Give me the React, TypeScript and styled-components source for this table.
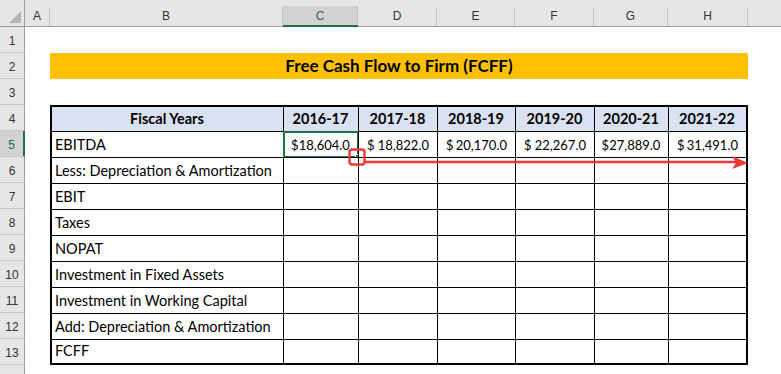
import styled, { createGlobalStyle } from "styled-components";

const GlobalStyle = createGlobalStyle`
	html, body {
		margin: 0;
		padding: 0;
		background: #ffffff;
	}
	body {
		width: 781px;
		height: 374px;
		overflow: hidden;
		font-family: "Lato", "Liberation Sans", sans-serif;
	}
`;

const COLS = [25, 25, 233, 75, 79, 78, 79, 74, 80];

const Sheet = styled.div`
	position: relative;
	display: grid;
	grid-template-columns: ${COLS.map((c) => c + "px").join(" ")} 1fr;
	grid-template-rows: 27px;
	grid-auto-rows: 26px;
	width: 781px;
	height: 374px;
	overflow: hidden;
	background: #ffffff;
`;

const Corner = styled.div`
	position: relative;
	background: #e6e6e6;
	border-right: 1px solid #9e9e9e;
	border-bottom: 1px solid #9e9e9e;
	box-sizing: border-box;

	svg {
		position: absolute;
		right: 3px;
		bottom: 3px;
	}
`;

const ColHead = styled.div<{ $active?: boolean; $last?: boolean }>`
	display: flex;
	align-items: flex-end;
	background: #e6e6e6;
	box-sizing: border-box;
	border-bottom: ${({ $active }) => ($active ? "2px solid #217346" : "1px solid #9e9e9e")};
	padding-top: 8px;

	span {
		flex: 1;
		height: 19px;
		display: flex;
		align-items: center;
		justify-content: center;
		box-sizing: border-box;
		border-right: ${({ $last }) => ($last ? "none" : "1px solid #c4c4c4")};
		background: ${({ $active }) => ($active ? "#d2d2d2" : "#e6e6e6")};
		color: ${({ $active }) => ($active ? "#1f6b45" : "#333333")};
		font-family: "Liberation Sans", sans-serif;
		font-size: 12px;
		padding-bottom: ${({ $active }) => ($active ? "0" : "1px")};
	}
`;

const RowHead = styled.div<{ $active?: boolean }>`
	display: flex;
	align-items: flex-end;
	justify-content: center;
	padding-bottom: 4px;
	box-sizing: border-box;
	background: ${({ $active }) => ($active ? "#d2d2d2" : "#e6e6e6")};
	border-bottom: 1px solid #c8c8c8;
	border-right: ${({ $active }) => ($active ? "2px solid #217346" : "1px solid #9e9e9e")};
	color: ${({ $active }) => ($active ? "#1f6b45" : "#333333")};
	font-family: "Liberation Sans", sans-serif;
	font-size: 12px;
`;

const Blank = styled.div<{ $span?: string }>`
	grid-column: ${({ $span }) => $span ?? "auto"};
`;

const TitleBar = styled.div`
	grid-column: 3 / 10;
	display: flex;
	align-items: flex-end;
	justify-content: center;
	padding-bottom: 3px;
	box-sizing: border-box;
	background: #ffc000;
	font-size: 17px;
	font-weight: 700;
	color: #000000;
`;

const Cell = styled.div<{
	$head?: boolean;
	$first?: boolean;
	$lastCol?: boolean;
	$lastRow?: boolean;
	$align?: "left" | "center" | "split";
}>`
	position: relative;
	display: flex;
	align-items: flex-end;
	justify-content: ${({ $align }) =>
		$align === "center" ? "center" : $align === "split" ? "space-between" : "flex-start"};
	box-sizing: border-box;
	padding: 0 ${({ $align }) => ($align === "split" ? "8px" : "4px")} 4px
		${({ $align }) => ($align === "split" ? "8px" : "3px")};
	background: ${({ $head }) => ($head ? "#d9e1f2" : "#ffffff")};
	border-top: ${({ $head }) => ($head ? "2px" : "1px")} solid #000000;
	border-left: ${({ $first }) => ($first ? "2px" : "1px")} solid #000000;
	border-right: ${({ $lastCol }) => ($lastCol ? "2px solid #000000" : "none")};
	border-bottom: ${({ $lastRow }) => ($lastRow ? "2px solid #000000" : "none")};
	font-size: ${({ $head, $first }) => ($head ? "14.5px" : $first ? "14.5px" : "13px")};
	font-weight: ${({ $head }) => ($head ? 700 : 400)};
	color: #000000;
	white-space: nowrap;
`;

const Selection = styled.div`
	position: absolute;
	top: -1px;
	left: -1px;
	right: -1px;
	bottom: -1px;
	border: 2px solid #217346;
	pointer-events: none;
`;

const FillHandle = styled.div`
	position: absolute;
	right: -5px;
	bottom: -5px;
	width: 5px;
	height: 5px;
	background: #217346;
	border: 1px solid #ffffff;
`;

const ArrowLayer = styled.svg`
	position: absolute;
	left: 345px;
	top: 145px;
	overflow: visible;
`;

const years = ["2016-17", "2017-18", "2018-19", "2019-20", "2020-21", "2021-22"];
const ebitda = ["18,604.0", "18,822.0", "20,170.0", "22,267.0", "27,889.0", "31,491.0"];
const tight = [true, false, false, false, true, false];
const labels = [
	"Less: Depreciation & Amortization",
	"EBIT",
	"Taxes",
	"NOPAT",
	"Investment in Fixed Assets",
	"Investment in Working Capital",
	"Add: Depreciation & Amortization",
	"FCFF",
];
const letters = ["A", "B", "C", "D", "E", "F", "G", "H", ""];

function App() {
	return (
		<>
			<GlobalStyle />
			<Sheet>
				<Corner>
					<svg width="12" height="12" viewBox="0 0 12 12">
						<polygon points="12,0 12,12 0,12" fill="#b4b4b4" />
					</svg>
				</Corner>
				{letters.map((l, i) => (
					<ColHead key={i} $active={l === "C"} $last={l === ""}>
						<span>{l}</span>
					</ColHead>
				))}

				{/* row 1 */}
				<RowHead>1</RowHead>
				<Blank />
				<Blank $span="3 / 11" />

				{/* row 2 */}
				<RowHead>2</RowHead>
				<Blank />
				<TitleBar>Free Cash Flow to Firm (FCFF)</TitleBar>
				<Blank />

				{/* row 3 */}
				<RowHead>3</RowHead>
				<Blank />
				<Blank $span="3 / 11" />

				{/* row 4 */}
				<RowHead>4</RowHead>
				<Blank />
				<Cell $head $first $align="center">
					Fiscal Years
				</Cell>
				{years.map((y, i) => (
					<Cell key={y} $head $align="center" $lastCol={i === years.length - 1}>
						{y}
					</Cell>
				))}
				<Blank />

				{/* row 5 */}
				<RowHead $active>5</RowHead>
				<Blank />
				<Cell $first>EBITDA</Cell>
				{ebitda.map((v, i) => (
					<Cell
						key={v}
						$align={tight[i] ? "center" : "split"}
						$lastCol={i === ebitda.length - 1}
					>
						{tight[i] ? (
							<span>${v}</span>
						) : (
							<>
								<span>$</span>
								<span>{v}</span>
							</>
						)}
						{i === 0 && (
							<Selection>
								<FillHandle />
							</Selection>
						)}
					</Cell>
				))}
				<Blank />

				{labels.map((label, r) => (
					<>
						<RowHead key={"h" + r}>{r + 6}</RowHead>
						<Blank key={"a" + r} />
						<Cell key={"b" + r} $first $lastRow={r === labels.length - 1}>
							{label}
						</Cell>
						{years.map((y, i) => (
							<Cell
								key={y + r}
								$lastCol={i === years.length - 1}
								$lastRow={r === labels.length - 1}
							/>
						))}
						<Blank key={"z" + r} />
					</>
				))}

				<RowHead />

				<ArrowLayer width="410" height="30">
					<rect x="4.5" y="4.5" width="15" height="15" rx="2.5" fill="none" stroke="#f03a3a" strokeWidth="2.4" />
					<line x1="20" y1="17" x2="392" y2="17" stroke="#f03a3a" strokeWidth="2.4" />
					<polygon points="387,11 403,18 387,24 391,18" fill="#f03a3a" />
				</ArrowLayer>
			</Sheet>
		</>
	);
}

export default App;
